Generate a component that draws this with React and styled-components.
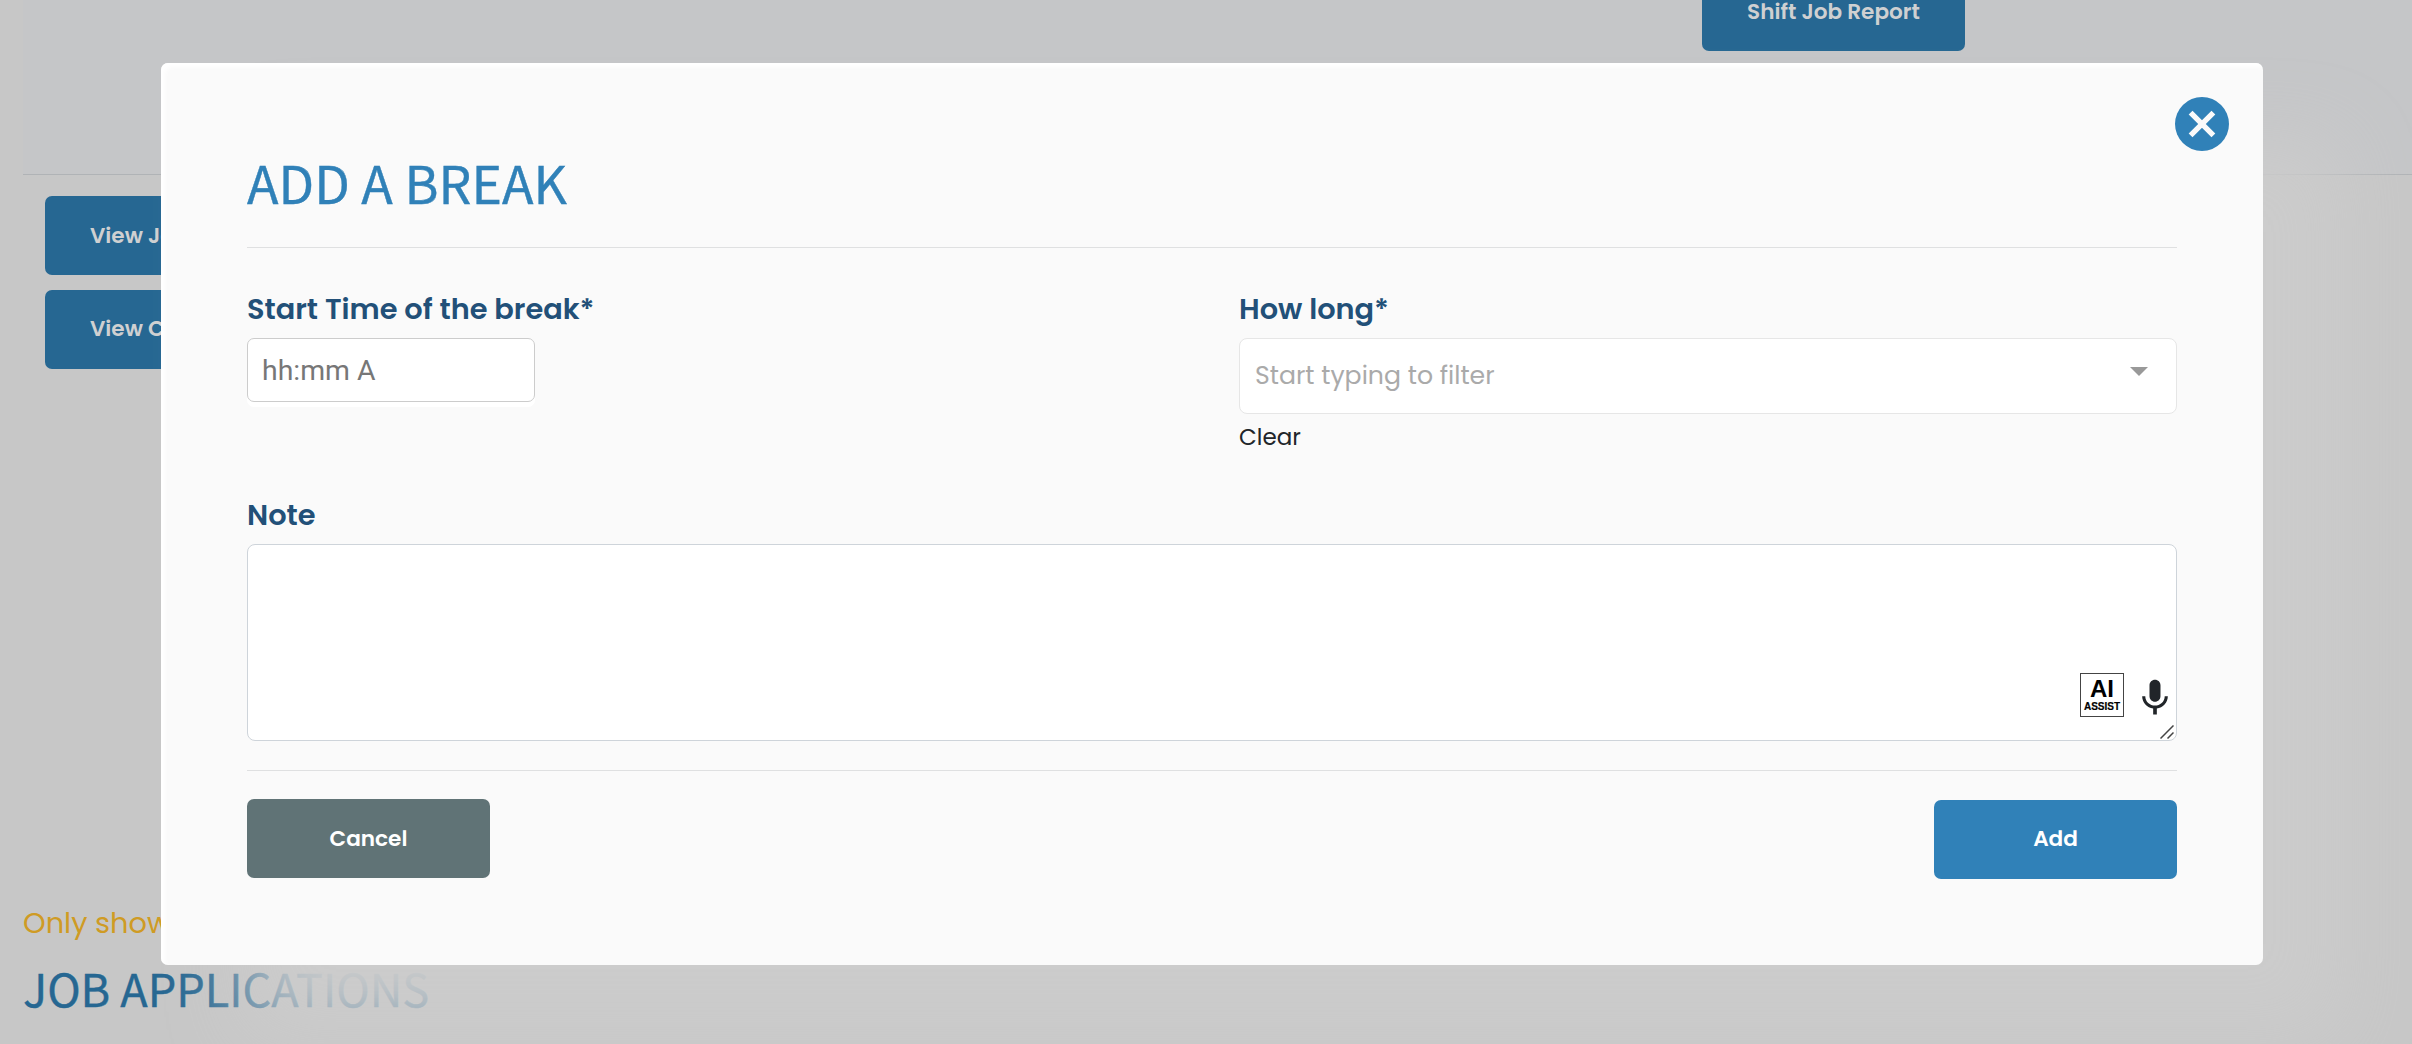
import React, { useState } from 'react'
import styled, { createGlobalStyle } from 'styled-components';
import { MdMic } from 'react-icons/md';

const App = () => {
    const [time, setTime] = useState('');
    const [length, setLength] = useState('');
    const [note, setNote] = useState('');

  return (
    <Page>
        <GlobalStyle/>
        <ReportPanel>
            <Button $tone="dim" $width="263px">Shift Job Report</Button>
        </ReportPanel>
        <JobActions>
            <Button $tone="dim" $width="263px" $left>View Job</Button>
            <Button $tone="dim" $width="263px" $left $lift="2px">View Chat</Button>
        </JobActions>
        <Notice>Only showing</Notice>
        <SectionTitle>JOB APPLICATIONS</SectionTitle>

        <Modal>
            <CloseButton aria-label="Close">
                <svg width="54" height="54" viewBox="0 0 54 54">
                    <path d="M15.6 15.6L38.4 38.4M38.4 15.6L15.6 38.4" stroke="#fafafa" strokeWidth="5.4"/>
                </svg>
            </CloseButton>
            <Title>ADD A BREAK</Title>
            <Fields>
                <div>
                    <Label>Start Time of the break*</Label>
                    <TimeInput placeholder="hh:mm A" value={time} onChange={(e) => { setTime(e.target.value) }}/>
                </div>
                <div>
                    <Label>How long*</Label>
                    <SelectBox>
                        <FilterInput placeholder="Start typing to filter" value={length} onChange={(e) => { setLength(e.target.value) }}/>
                        <Caret/>
                    </SelectBox>
                    <Clear onClick={() => { setLength('') }}>Clear</Clear>
                </div>
            </Fields>
            <Label>Note</Label>
            <NoteBox>
                <NoteInput value={note} onChange={(e) => { setNote(e.target.value) }}/>
                <NoteTools>
                    <Assist><b>AI</b><span>ASSIST</span></Assist>
                    <MdMic size={44} color="#212529"/>
                </NoteTools>
                <Grip width="14" height="14" viewBox="0 0 14 14">
                    <path d="M0.5 13.5L13.5 0.5M7.5 13.5L13.5 7.5" stroke="#444" strokeWidth="1.5"/>
                </Grip>
            </NoteBox>
            <Footer>
                <Button $tone="grey" $width="243px">Cancel</Button>
                <Button $tone="blue" $width="243px" $lift="2px">Add</Button>
            </Footer>
        </Modal>
    </Page>
  )
}

const GlobalStyle = createGlobalStyle`
*{
    box-sizing:border-box;
}
body{
    margin:0;
    font-family:Poppins, Inter, "Open Sans", sans-serif;
}
`
const tones = {
    dim: { background: "#266792", color: "#cfd0d1" },
    blue: { background: "#3081b8", color: "#fff" },
    grey: { background: "#607376", color: "#fff" },
}
const Page = styled.div`
position:relative;
width:100%;
height:1044px;
overflow:hidden;
background:#c7c7c7;
`
const ReportPanel = styled.div`
display:flex;
align-items:flex-end;
height:175px;
margin-left:23px;
padding:0 0 123px 1679px;
background:#c5c6c8;
border-bottom:1px solid #b0b3b6;
`
const Button = styled.button`
display:flex;
align-items:center;
justify-content:${(props) => (props.$left ? "flex-start" : "center")};
flex-shrink:0;
width:${(props) => props.$width};
height:79px;
padding:${(props) => (props.$left ? "0 45px" : "0")};
padding-bottom:${(props) => props.$lift || "0"};
border:none;
border-radius:7px;
background:${(props) => tones[props.$tone].background};
color:${(props) => tones[props.$tone].color};
font-family:inherit;
font-size:21.6px;
font-weight:600;
white-space:nowrap;
`
const JobActions = styled.div`
display:flex;
flex-direction:column;
gap:15px;
height:729px;
padding:21px 0 0 45px;
`
const Notice = styled.div`
height:61px;
padding-left:23px;
color:#cf9b24;
font-size:28.8px;
line-height:38px;
`
const SectionTitle = styled.h2`
margin:0;
padding-left:23px;
color:#266792;
font-family:"Noto Sans CJK SC", sans-serif;
font-size:45.1px;
font-weight:400;
line-height:46px;
-webkit-text-stroke:0.4px #266792;
`
const Modal = styled.div`
position:absolute;
top:63px;
left:161px;
width:2102px;
height:902px;
padding:91px 86px 0;
border-radius:7px;
background:#fafafa;
box-shadow:80px 74px 80px #cccccc, inset 4px 4px 5px #fff;
`
const CloseButton = styled.button`
position:absolute;
top:33.5px;
right:34px;
width:54px;
height:54px;
padding:0;
border:none;
border-radius:50%;
background:#3081b8;
cursor:pointer;
`
const Title = styled.h1`
height:94px;
margin:0 0 41px;
border-bottom:1px solid #dfe0e1;
color:#3081b8;
font-family:"Noto Sans CJK SC", sans-serif;
font-size:51.8px;
font-weight:400;
line-height:56px;
-webkit-text-stroke:0.4px #3081b8;
`
const Fields = styled.div`
display:grid;
grid-template-columns:938px 938px;
column-gap:54px;
height:206px;
`
const Label = styled.label`
display:block;
height:49px;
color:#225078;
font-size:28.8px;
font-weight:600;
line-height:40px;
`
const TimeInput = styled.input`
display:block;
width:288px;
height:64px;
padding:1px 14px 0;
border:1px solid #ccc;
border-radius:7px;
background:#fff;
box-shadow:0 5px 0 #fff;
font-family:Roboto, "Liberation Sans", sans-serif;
font-size:28.4px;
outline:none;
&::placeholder{
    color:#777;
}
`
const SelectBox = styled.div`
display:flex;
align-items:center;
height:76px;
padding:0 28px 0 15px;
border:1px solid #e6e6e6;
border-radius:8px;
background:#fff;
`
const FilterInput = styled.input`
flex:1;
padding:0;
border:none;
background:none;
font-family:inherit;
font-size:25.2px;
outline:none;
&::placeholder{
    color:#aaa;
}
`
const Caret = styled.span`
margin-bottom:9px;
border:9px solid transparent;
border-top-color:#999;
border-bottom:0;
`
const Clear = styled.div`
width:fit-content;
margin-top:5px;
color:#212529;
font-size:23px;
line-height:36px;
cursor:pointer;
`
const NoteBox = styled.div`
position:relative;
height:197px;
`
const NoteInput = styled.textarea`
display:block;
width:100%;
height:100%;
padding:15px;
border:1px solid #ced4da;
border-radius:8px;
background:#fff;
font-family:inherit;
font-size:25px;
outline:none;
resize:none;
`
const NoteTools = styled.div`
position:absolute;
right:0;
bottom:21px;
display:flex;
align-items:flex-end;
gap:9px;
`
const Assist = styled.div`
display:flex;
flex-direction:column;
align-items:center;
width:44px;
height:44px;
margin-bottom:3px;
padding-top:3px;
border:1px solid #444;
color:#000;
font-family:"Liberation Sans", sans-serif;
font-weight:700;
b{
    font-size:24px;
    line-height:24px;
}
span{
    font-size:10px;
    line-height:11px;
    -webkit-text-stroke:0.2px #000;
}
`
const Grip = styled.svg`
position:absolute;
right:3px;
bottom:2px;
`
const Footer = styled.div`
display:flex;
justify-content:space-between;
margin-top:29px;
padding-top:28px;
border-top:1px solid #dfe0e1;
button:last-child{
    margin-top:1px;
}
`
export default App;
